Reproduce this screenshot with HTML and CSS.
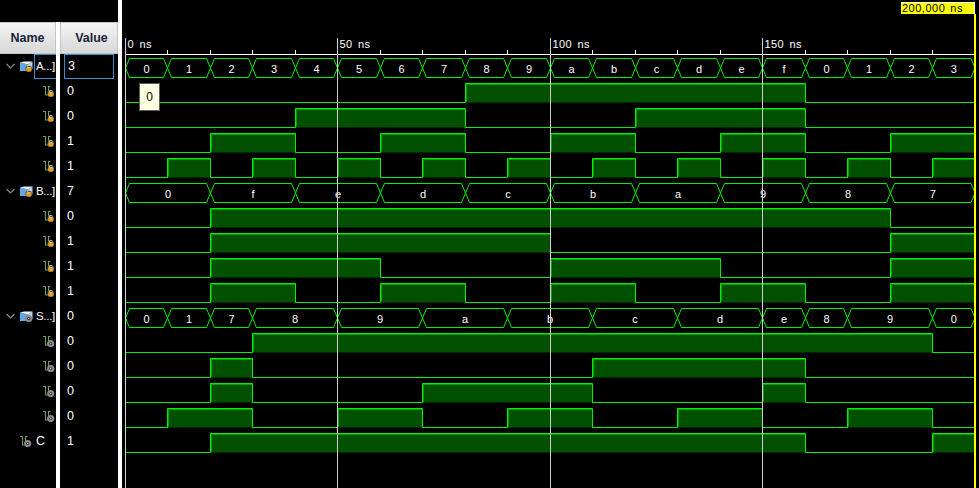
FILE: index.html
```html
<!DOCTYPE html>
<html lang="en">
<head>
<meta charset="utf-8">
<title>Waveform</title>
<link rel="stylesheet" href="styles.css">
</head>
<body>
<svg class="defs" width="0" height="0" aria-hidden="true">
  <defs>
    <g id="gold-lock">
      <circle cx="8.7" cy="9.7" r="3.3" fill="#5a4f38"/>
      <rect x="6.2" y="8.2" width="5.2" height="4.4" rx="1" fill="#e0a028"/>
      <rect x="7.7" y="6.6" width="2.2" height="1.8" fill="none" stroke="#cfcfb8" stroke-width=".8"/>
    </g>
    <g id="gear">
      <circle cx="8.7" cy="9.5" r="3.6" fill="#8a8a8a"/>
      <circle cx="8.7" cy="9.5" r="1.6" fill="#333"/>
      <circle cx="8.7" cy="9.5" r=".7" fill="#d0d0d0"/>
    </g>
    <path id="wave" d="M1 2.5H3.5V11H6.5V2.5H8.5" fill="none" stroke="#6aa055" stroke-width="1.1"/>
    <g id="bus">
      <path d="M0 3.5L8 5.5V12H0Z" fill="#5fa8ea"/>
      <path d="M8 5.5L12.5 2.5V10H8Z" fill="#b4d6f0"/>
      <path d="M0 3.5L4 2.5L12.5 2.5L8 5.5Z" fill="#eef6fc"/>
    </g>
    <symbol id="bit-lock" viewBox="0 0 13 13"><use href="#wave"/><use href="#gold-lock"/></symbol>
    <symbol id="bit-gear" viewBox="0 0 13 13"><use href="#wave"/><use href="#gear"/></symbol>
    <symbol id="bus-lock" viewBox="0 0 13 13"><use href="#bus"/><use href="#gold-lock"/></symbol>
    <symbol id="bus-gear" viewBox="0 0 13 13"><use href="#bus"/><use href="#gear"/></symbol>
    <symbol id="chev" viewBox="0 0 9 6"><path d="M.5 1L4.5 5L8.5 1" fill="none" stroke="#8a8a8a" stroke-width="1.2"/></symbol>
  </defs>
</svg>
<div class="app">
  <section class="col col-name">
    <header class="head head-name">Name</header>
    <div class="row group selected"><svg class="chev"><use href="#chev"/></svg><svg class="ico"><use href="#bus-lock"/></svg><span class="label box">A...]</span></div>
    <div class="row bit"><svg class="ico"><use href="#bit-lock"/></svg></div>
    <div class="row bit"><svg class="ico"><use href="#bit-lock"/></svg></div>
    <div class="row bit"><svg class="ico"><use href="#bit-lock"/></svg></div>
    <div class="row bit"><svg class="ico"><use href="#bit-lock"/></svg></div>
    <div class="row group"><svg class="chev"><use href="#chev"/></svg><svg class="ico"><use href="#bus-lock"/></svg><span class="label">B...]</span></div>
    <div class="row bit"><svg class="ico"><use href="#bit-lock"/></svg></div>
    <div class="row bit"><svg class="ico"><use href="#bit-lock"/></svg></div>
    <div class="row bit"><svg class="ico"><use href="#bit-lock"/></svg></div>
    <div class="row bit"><svg class="ico"><use href="#bit-lock"/></svg></div>
    <div class="row group"><svg class="chev"><use href="#chev"/></svg><svg class="ico"><use href="#bus-gear"/></svg><span class="label">S...]</span></div>
    <div class="row bit"><svg class="ico"><use href="#bit-gear"/></svg></div>
    <div class="row bit"><svg class="ico"><use href="#bit-gear"/></svg></div>
    <div class="row bit"><svg class="ico"><use href="#bit-gear"/></svg></div>
    <div class="row bit"><svg class="ico"><use href="#bit-gear"/></svg></div>
    <div class="row single"><svg class="ico"><use href="#bit-gear"/></svg><span class="label">C</span></div>
  </section>
  <section class="col col-value">
    <header class="head head-value">Value</header>
    <div class="val selected"><span class="box-val">3</span></div>
    <div class="val">0</div><div class="val">0</div><div class="val">1</div><div class="val">1</div>
    <div class="val">7</div>
    <div class="val">0</div><div class="val">1</div><div class="val">1</div><div class="val">1</div>
    <div class="val">0</div>
    <div class="val">0</div><div class="val">0</div><div class="val">0</div><div class="val">0</div>
    <div class="val">1</div>
  </section>
  <section class="wave">
    <svg id="wave-svg" class="wave-svg" width="857" height="488" viewBox="122 0 857 488"></svg>
    <div class="tip">0</div>
    <div class="cursor-label">200,000 ns</div>
  </section>
</div>
<script src="wave.js"></script>
</body>
</html>
```
FILE: styles.css
```css
html, body {
  margin: 0;
  padding: 0;
  background: #000;
  height: 100%;
  overflow: hidden;
}
.defs { position: absolute; }
.app {
  display: flex;
  width: 979px;
  height: 488px;
  font-family: "Liberation Sans", Arial, sans-serif;
  color: #fff;
  background: #000;
}
.col { display: flex; flex-direction: column; padding-top: 22px; box-sizing: border-box; height: 488px; }
.col-name { width: 56px; position: relative; }
.col-value {
  width: 58px;
  margin-left: 4px;
  position: relative;
}
.col-name::after {
  content: "";
  position: absolute;
  top: 22px; bottom: 0; right: -4px;
  width: 4px;
  background: #fff;
}
.head {
  height: 32px;
  box-sizing: border-box;
  display: flex;
  align-items: center;
  justify-content: center;
  font-size: 12.5px;
  font-weight: 700;
  color: #1a2438;
  background: linear-gradient(#f4f4f4, #e4e4e4 55%, #d8d8d8);
  border: 1px solid #c4c4c4;
  flex: none;
  padding-bottom: 1px;
}
.head-name { border-left: 0; }
.head-value { padding-left: 5px; }
.row {
  height: 25px;
  box-sizing: border-box;
  padding-bottom: 2px;
  flex: none;
  display: flex;
  align-items: center;
  font-size: 12px;
  position: relative;
}
.group { padding-left: 6px; }
.bit { padding-left: 42px; }
.single { padding-left: 19px; }
.chev { width: 9px; height: 6px; margin-right: 5px; }
.ico { width: 13px; height: 13px; flex: none; }
.label { white-space: nowrap; line-height: 14px; }
.group .label { margin-left: 3px; letter-spacing: -.3px; font-size: 11.5px; }
.single .label { margin-left: 4px; font-size: 12.5px; }
.group .box {
  box-sizing: border-box;
  width: 22px;
  height: 25px;
  margin-left: 1px;
  margin-bottom: -2px;
  padding: 0 0 2px 1px;
  display: flex;
  align-items: center;
  border: 1px solid #3a8fd0;
  border-right: 0;
}
.val {
  height: 25px;
  flex: none;
  display: flex;
  align-items: center;
  font-size: 12.5px;
  padding: 0 0 2px 7px;
  box-sizing: border-box;
}
.val.selected { padding: 0 4px; }
.box-val {
  display: flex;
  align-items: center;
  box-sizing: border-box;
  width: 50px;
  height: 25px;
  padding: 0 0 2px 3px;
  border: 1px solid #3a8fd0;
}
.wave {
  width: 857px;
  height: 488px;
  flex: none;
  position: relative;
  border-left: 4px solid #fff;
}
.wave-svg { display: block; }
.wave-text {
  font-family: "Liberation Sans", Arial, sans-serif;
  font-size: 11px;
  fill: #fff;
}
.ruler-text {
  letter-spacing: .4px;
  word-spacing: 2px;
}
.tip {
  position: absolute;
  left: 17px;
  top: 83px;
  width: 21px;
  height: 28px;
  box-sizing: border-box;
  background: #ffffe1;
  border: 1px solid #5c5c5c;
  color: #000;
  font-size: 12px;
  display: flex;
  align-items: center;
  justify-content: center;
}
.cursor-label {
  position: absolute;
  left: 779px;
  top: 2px;
  width: 74px;
  height: 12px;
  background: #ffff00;
  border-top: 1px solid #fff;
  border-right: 1px solid #fff;
  box-sizing: border-box;
  color: #000;
  font-size: 11px;
  letter-spacing: .5px;
  word-spacing: 1.5px;
  line-height: 11px;
  padding-left: 1px;
  white-space: nowrap;
}
```
FILE: wave.js
```js
(function () {
  var NS = "http://www.w3.org/2000/svg";
  var svg = document.getElementById("wave-svg");
  var GREEN = "#00f000";
  var FILL = "#005000";
  var INNER = "#00a000";

  function X(t) { return Math.floor(125 + 4.25 * t) + 0.5; }
  function add(tag, attrs, text) {
    var el = document.createElementNS(NS, tag);
    for (var k in attrs) el.setAttribute(k, attrs[k]);
    if (text !== undefined) el.textContent = text;
    svg.appendChild(el);
    return el;
  }
  function rowTop(n) { return 58.5 + 25 * n; }

  function drawBus(n, segs) {
    var top = rowTop(n), bot = top + 19, mid = top + 9.5;
    segs.forEach(function (s) {
      var a = X(s[0]), b = Math.min(X(s[1]), 975);
      add("path", {
        d: "M" + a + " " + mid + "L" + (a + 4) + " " + top + "H" + (b - 4) + "L" + b + " " + mid +
           "L" + (b - 4) + " " + bot + "H" + (a + 4) + "Z",
        fill: "none", stroke: GREEN
      });
      add("text", { x: (a + b) / 2, y: top + 14.5, "text-anchor": "middle", "class": "wave-text" }, s[2]);
    });
  }

  function drawBit(n, highs) {
    var top = rowTop(n), bot = top + 19;
    highs.forEach(function (h) {
      var a = X(h[0]), b = Math.min(X(h[1]), 975);
      add("rect", { x: a, y: top, width: b - a, height: 19, fill: FILL });
      add("path", { d: "M" + (a + 1) + " " + (bot - 1) + "V" + (top + 1) + "H" + b, fill: "none", stroke: INNER });
    });
    var d = "M125.5 " + bot, level = false;
    highs.forEach(function (h) {
      var a = X(h[0]), b = Math.min(X(h[1]), 975);
      d += "H" + a + "V" + top + "H" + b;
      if (h[1] < 200) d += "V" + bot;
      level = h[1] >= 200;
    });
    if (!level) d += "H975";
    add("path", { d: d, fill: "none", stroke: GREEN });
  }

  // Ruler
  add("path", { d: "M125 54.5H975", stroke: "#fff", fill: "none" });
  for (var t = 10; t < 200; t += 10) {
    if (t % 50) add("path", { d: "M" + X(t) + " 50V54", stroke: "#fff", fill: "none" });
  }
  [[0, "0 ns"], [50, "50 ns"], [100, "100 ns"], [150, "150 ns"]].forEach(function (m) {
    add("text", { x: X(m[0]) + 2, y: 48, "class": "wave-text ruler-text" }, m[1]);
  });

  // Signals
  var A = [];
  "0123456789abcdef0123".split("").forEach(function (c, i) { A.push([i * 10, i * 10 + 10, c]); });
  drawBus(0, A);
  drawBit(1, [[80, 160]]);
  drawBit(2, [[40, 80], [120, 160]]);
  drawBit(3, [[20, 40], [60, 80], [100, 120], [140, 160], [180, 200]]);
  drawBit(4, [[10, 20], [30, 40], [50, 60], [70, 80], [90, 100], [110, 120], [130, 140], [150, 160], [170, 180], [190, 200]]);
  var B = [];
  "0fedcba987".split("").forEach(function (c, i) { B.push([i * 20, i * 20 + 20, c]); });
  drawBus(5, B);
  drawBit(6, [[20, 180]]);
  drawBit(7, [[20, 100], [180, 200]]);
  drawBit(8, [[20, 60], [100, 140], [180, 200]]);
  drawBit(9, [[20, 40], [60, 80], [100, 120], [140, 160], [180, 200]]);
  drawBus(10, [[0, 10, "0"], [10, 20, "1"], [20, 30, "7"], [30, 50, "8"], [50, 70, "9"], [70, 90, "a"], [90, 110, "b"],
    [110, 130, "c"], [130, 150, "d"], [150, 160, "e"], [160, 170, "8"], [170, 190, "9"], [190, 200, "0"]]);
  drawBit(11, [[30, 190]]);
  drawBit(12, [[20, 30], [110, 160]]);
  drawBit(13, [[20, 30], [70, 110], [150, 160]]);
  drawBit(14, [[10, 30], [50, 70], [90, 110], [130, 150], [170, 190]]);
  drawBit(15, [[20, 160], [190, 200]]);

  // Major grid lines
  [0, 50, 100, 150].forEach(function (t) {
    add("path", { d: "M" + X(t) + " 38V488", stroke: "#d0d0d0", fill: "none" });
  });
  // Cursor
  add("rect", { x: 974, y: 14, width: 2, height: 474, fill: "#ffff00" });
})();
```
